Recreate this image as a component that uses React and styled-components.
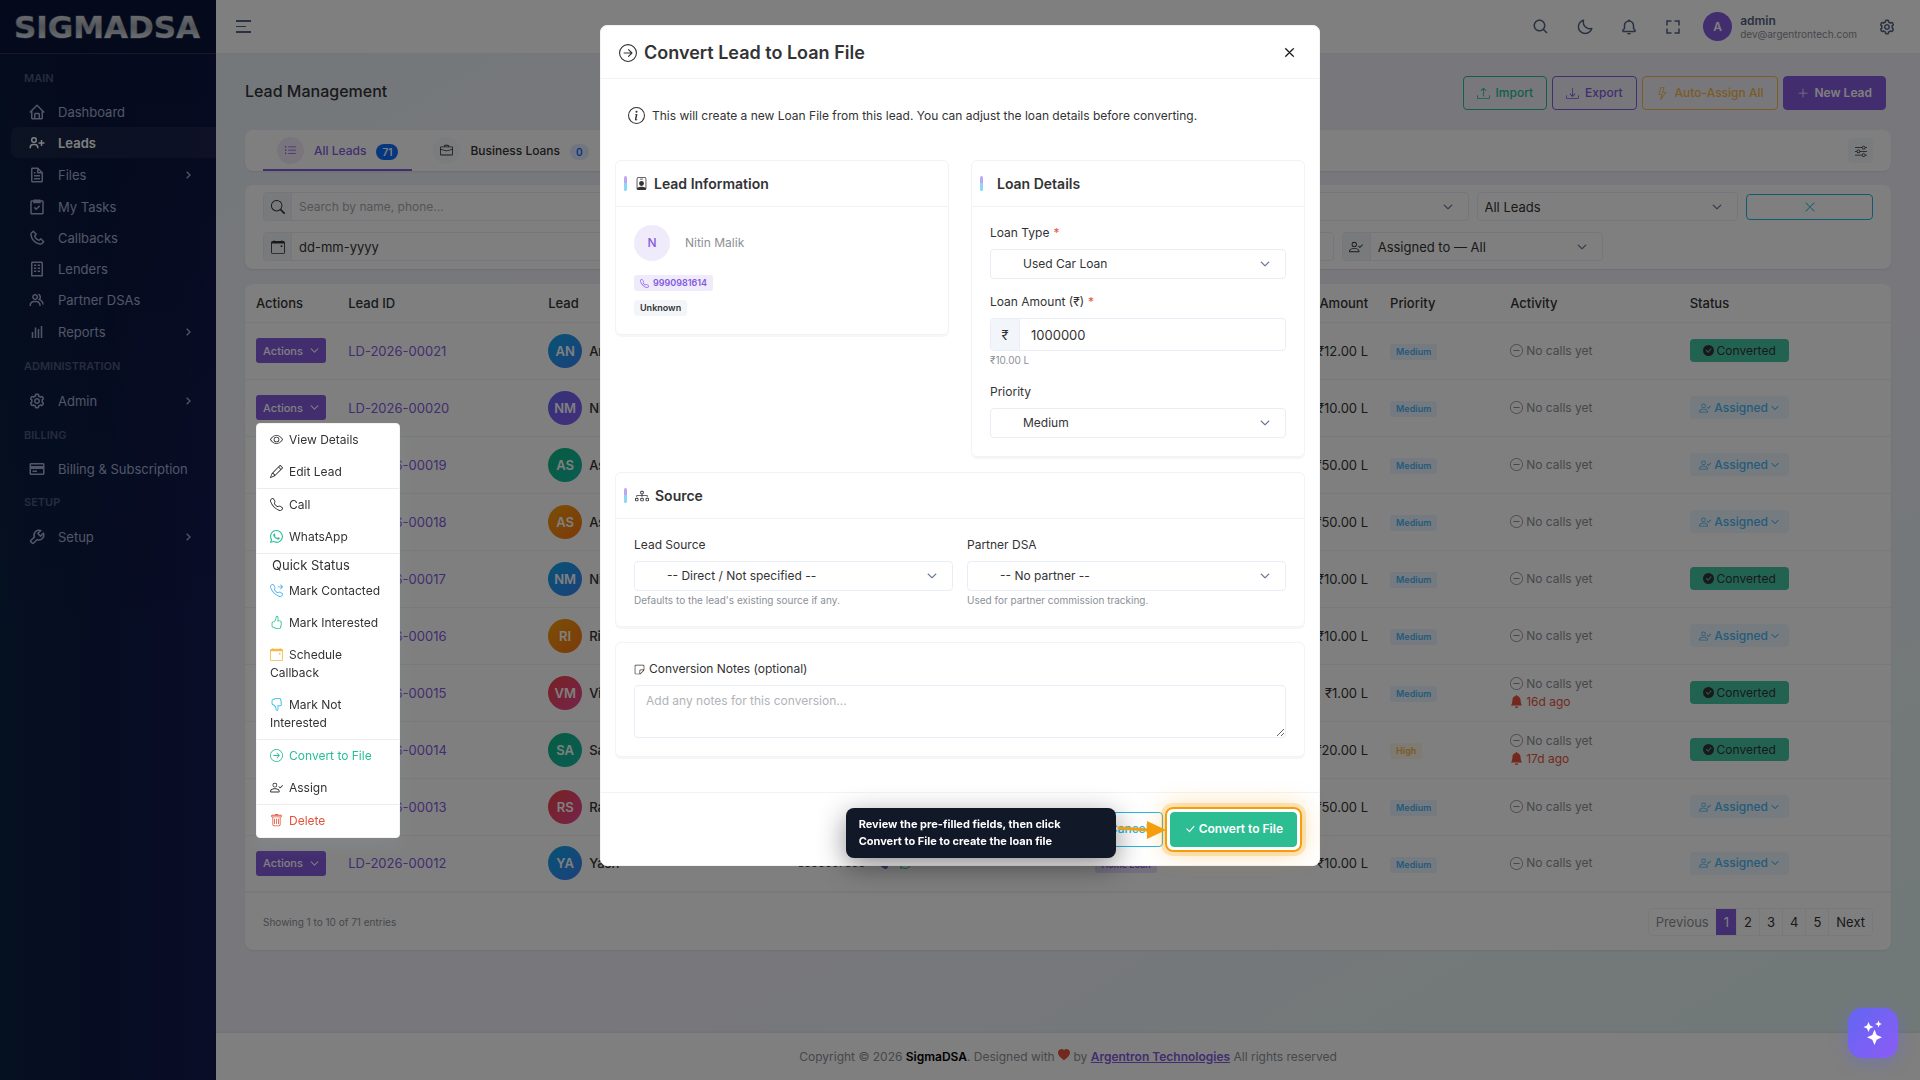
import { useState } from "react";
import styled, { createGlobalStyle, css } from "styled-components";
import {
  BiBarChart,
  BiBell,
  BiBuilding,
  BiChevronRight,
  BiCog,
  BiCreditCard,
  BiFile,
  BiFullscreen,
  BiGroup,
  BiHome,
  BiMoon,
  BiPhone,
  BiSearch,
  BiTask,
  BiUserPlus,
  BiWrench,
} from "react-icons/bi";
import {
  BsArrowRightCircle,
  BsBellFill,
  BsBriefcase,
  BsCalendarEvent,
  BsCheckCircleFill,
  BsCheckLg,
  BsChevronDown,
  BsDashCircle,
  BsDiagram3,
  BsDownload,
  BsEye,
  BsHandThumbsDown,
  BsHandThumbsUp,
  BsHeartFill,
  BsInfoCircle,
  BsLightning,
  BsListUl,
  BsPencil,
  BsPersonBadge,
  BsPlusLg,
  BsSearch,
  BsSliders,
  BsSticky,
  BsTelephone,
  BsTelephoneFill,
  BsTelephoneForward,
  BsTrash,
  BsUpload,
  BsWhatsapp,
  BsXLg,
} from "react-icons/bs";

const GlobalStyle = createGlobalStyle`
  :root {
    --primary: #845adf;
    --info: #49b6f5;
    --cyan: #23b7e5;
    --success: #26bf94;
    --warning: #f5b849;
    --danger: #e6533c;
    --text: #333335;
    --muted: #8c9097;
    --border: #f3f3f3;
    --input-border: #e9edf6;
  }
  * {
    box-sizing: border-box;
  }
  body {
    margin: 0;
    color: var(--text);
    font-family: Inter, "Liberation Sans", sans-serif;
    font-size: 13px;
    line-height: 18px;
  }
  button, input, select, textarea {
    font: inherit;
    color: inherit;
    margin: 0;
  }
  button {
    cursor: pointer;
    padding: 0;
    border: 0;
    background: none;
  }
  h1, h2, h3, p, ul {
    margin: 0;
    padding: 0;
  }
  svg {
    flex-shrink: 0;
  }
`;

/* ---------- shell ---------- */

const Page = styled.div`
  display: flex;
  min-height: 100vh;
  background: linear-gradient(150deg, #e6f1f6 0%, #f1eff9 34%, #f1eff9 62%, #e3f3f0 92%);
`;

const Sidebar = styled.aside`
  width: 216px;
  flex-shrink: 0;
  background:
    linear-gradient(180deg, rgba(6, 14, 44, 0.45), rgba(6, 14, 44, 0) 60%),
    linear-gradient(90deg, #0b2143 0%, #0d1a45 50%, #131a50 100%);
`;

const Brand = styled.div`
  height: 54px;
  display: flex;
  align-items: center;
  justify-content: center;
  background: #0b1338;
  border-bottom: 1px solid #2a3358;
`;

const Menu = styled.nav`
  padding: 6px 0 0 11px;
`;

const Category = styled.div`
  height: 36px;
  padding: 0 13px;
  display: flex;
  align-items: center;
  font-size: 11px;
  font-weight: 600;
  color: #4c5a7c;
`;

const NavItem = styled.a`
  height: ${(props) => (props.$tall ? "33px" : "31px")};
  padding: 0 20px 0 17px;
  display: flex;
  align-items: center;
  gap: 12px;
  border-radius: 7px 0 0 7px;
  font-size: 13px;
  font-weight: ${(props) => (props.$active ? 600 : 400)};
  color: ${(props) => (props.$active ? "#fff" : "#a3aed1")};
  background: ${(props) =>
    props.$active ? "rgba(255, 255, 255, 0.06)" : "none"};
  text-decoration: none;
  white-space: nowrap;
  span {
    flex: 1;
  }
`;

const Main = styled.div`
  flex: 1;
  min-width: 0;
  display: flex;
  flex-direction: column;
`;

const Header = styled.header`
  height: 54px;
  padding: 0 24px 0 20px;
  display: flex;
  align-items: center;
  justify-content: space-between;
  background: #fff;
  border-bottom: 1px solid #e9edf2;
  color: #536485;
`;

const HeaderRight = styled.div`
  display: flex;
  align-items: center;
  gap: 26px;
  font-size: 18px;
`;

const IconButton = styled.button`
  display: flex;
`;

const Profile = styled.div`
  display: flex;
  align-items: center;
  gap: 8px;
  margin: 0 -5px 0 -5px;
`;

const ProfileAvatar = styled.div`
  width: 29px;
  height: 29px;
  border-radius: 50%;
  display: grid;
  place-items: center;
  background: var(--primary);
  color: #fff;
  font-size: 12px;
  font-weight: 600;
`;

const ProfileName = styled.div`
  font-size: 12px;
  line-height: 15px;
  font-weight: 600;
`;

const ProfileMail = styled.div`
  font-size: 10px;
  line-height: 13px;
  color: var(--muted);
`;

const Content = styled.main`
  flex: 1;
  padding: 22px 29px 0;
`;

const PageHead = styled.div`
  display: flex;
  align-items: center;
  justify-content: space-between;
  padding-right: 5px;
  margin-bottom: 20px;
`;

const PageTitle = styled.h1`
  padding-bottom: 4px;
  font-size: 16px;
  line-height: 24px;
  font-weight: 500;
`;

const ButtonRow = styled.div`
  display: flex;
  gap: 5px;
`;

const Button = styled.button`
  height: 34px;
  padding: 0 13px;
  display: flex;
  align-items: center;
  gap: 6px;
  border: 1px solid ${(props) => props.$color};
  border-radius: 4px;
  font-size: 12px;
  font-weight: ${(props) => (props.$solid ? 600 : 500)};
  color: ${(props) => (props.$solid ? "#fff" : props.$color)};
  background: ${(props) => (props.$solid ? props.$color : "transparent")};
`;

const Card = styled.section`
  background: #fff;
  border-radius: 8px;
  box-shadow: 0 1px 2px rgba(0, 0, 0, 0.08);
`;

const Tabs = styled(Card)`
  height: 41px;
  padding: 0 18px;
  margin-bottom: 14px;
  display: flex;
  align-items: center;
  gap: 7px;
`;

const Tab = styled.button`
  height: 41px;
  padding: 2px 14px 0;
  display: flex;
  align-items: center;
  gap: 10px;
  border-bottom: 2px solid
    ${(props) => (props.$active ? "var(--primary)" : "transparent")};
  color: ${(props) => (props.$active ? "var(--primary)" : "var(--text)")};
  font-size: 12px;
  font-weight: 500;
`;

const TabIcon = styled.span`
  width: 27px;
  height: 27px;
  border-radius: 50%;
  display: grid;
  place-items: center;
  background: ${(props) => (props.$active ? "#f0ebfb" : "#f7f8fa")};
`;

const TabCount = styled.span`
  margin-top: 2px;
  padding: 0 6px;
  border-radius: 8px;
  font-size: 10px;
  line-height: 16px;
  font-weight: 600;
  color: ${(props) => (props.$active ? "#fff" : "#0d6efd")};
  background: ${(props) => (props.$active ? "#0d6efd" : "#e0ebfe")};
`;

const TabSettings = styled.button`
  width: 25px;
  height: 25px;
  margin-left: auto;
  display: grid;
  place-items: center;
  border-radius: 4px;
  background: #f5f6f9;
`;

const Filters = styled(Card)`
  padding: 7px 18px 8px;
  margin-bottom: 15px;
  display: grid;
  grid-template-columns: repeat(12, 1fr);
  gap: 11px 8px;
  align-items: center;
`;

const Group = styled.div`
  grid-column: span ${(props) => props.$span};
  min-width: 0;
  height: 29px;
  display: flex;
  border: 1px solid var(--input-border);
  border-radius: 4px;
  overflow: hidden;
`;

const Addon = styled.label`
  width: ${(props) => props.$width || "28px"};
  flex-shrink: 0;
  display: grid;
  place-items: center;
  background: #f2f5f9;
  border-right: 1px solid var(--input-border);
`;

const TextInput = styled.input`
  flex: 1;
  min-width: 0;
  padding: 0 ${(props) => props.$pad || "7px"};
  border: 0;
  outline: 0;
  background: none;
  font-size: ${(props) => (props.$small ? "12px" : "13px")};
  &::placeholder {
    color: ${(props) => (props.$dark ? "var(--text)" : "#a9abb0")};
    opacity: 1;
  }
`;

const SelectShell = styled.div`
  flex: 1;
  min-width: 0;
  display: grid;
  align-items: center;
  select,
  svg {
    grid-area: 1 / 1;
  }
  svg {
    justify-self: end;
    margin-right: 15px;
    pointer-events: none;
    color: #536485;
    stroke-width: 1;
  }
`;

const SelectInput = styled.select`
  width: 100%;
  height: 100%;
  padding: 0 36px 0 ${(props) => props.$pad || "7px"};
  appearance: none;
  border: 0;
  outline: 0;
  background: none;
  font-size: ${(props) => (props.$pad ? "12px" : "13px")};
`;

const ClearButton = styled.button`
  height: 26px;
  display: grid;
  place-items: center;
  border: 1px solid var(--cyan);
  border-radius: 4px;
  color: var(--cyan);
`;

/* ---------- table ---------- */

const Table = styled.table`
  width: 100%;
  table-layout: fixed;
  border-collapse: collapse;
  th,
  td {
    padding: 0 11px;
    text-align: left;
    border-bottom: 1px solid var(--border);
    white-space: nowrap;
  }
  th {
    height: 38px;
    font-weight: 500;
  }
  td {
    height: 57px;
  }
  tbody tr:last-child td {
    border-bottom-width: 2px;
  }
`;

const Col = styled.col`
  width: ${(props) => props.$w}%;
`;

const AmountHead = styled.th`
  && {
    text-align: right;
  }
`;

const AmountCell = styled.td`
  && {
    text-align: right;
  }
`;

const ActionsCell = styled.div`
  position: relative;
  width: 70px;
`;

const ActionsButton = styled.button`
  width: 70px;
  height: 25px;
  display: flex;
  align-items: center;
  justify-content: center;
  gap: 7px;
  border-radius: 3px;
  background: var(--primary);
  color: #fff;
  font-size: 11px;
  font-weight: 500;
  svg {
    stroke-width: 1;
  }
`;

const LeadLink = styled.a`
  color: var(--primary);
  text-decoration: none;
`;

const LeadCell = styled.div`
  display: flex;
  align-items: center;
  gap: 7px;
  font-weight: 500;
`;

const Avatar = styled.div`
  width: 34px;
  height: 34px;
  border-radius: 50%;
  display: grid;
  place-items: center;
  color: #fff;
  font-weight: 600;
  background: ${(props) => props.$bg};
`;

const PhoneCell = styled.div`
  display: flex;
  align-items: center;
  gap: 12px;
  font-size: 11px;
`;

const Badge = styled.span`
  display: inline-flex;
  align-items: center;
  gap: 4px;
  padding: 0 6px;
  border-radius: 3px;
  font-size: 9px;
  line-height: 16px;
  font-weight: 600;
  color: ${(props) => props.$color};
  background: ${(props) => props.$bg};
`;

const Activity = styled.div`
  display: flex;
  align-items: center;
  gap: 3px;
  font-size: 12px;
  color: ${(props) => (props.$late ? "var(--danger)" : "var(--muted)")};
`;

const Status = styled.button`
  width: 99px;
  height: 23px;
  display: flex;
  align-items: center;
  justify-content: center;
  gap: 3px;
  border-radius: 4px;
  font-size: 12px;
  font-weight: ${(props) => (props.$converted ? 400 : 500)};
  color: ${(props) => (props.$converted ? "var(--text)" : "var(--info)")};
  background: ${(props) => (props.$converted ? "#45c5a1" : "#eaf6fe")};
`;

const TableFoot = styled.div`
  height: 57px;
  padding: 0 18px;
  display: flex;
  align-items: center;
  justify-content: space-between;
  font-size: 10px;
  color: var(--muted);
`;

const Pagination = styled.nav`
  display: flex;
  border: 1px solid var(--border);
  border-radius: 4px;
`;

const PageButton = styled.button`
  height: 26px;
  padding: 0 7px;
  font-size: 13px;
  border-left: 1px solid var(--border);
  color: ${(props) => (props.$muted ? "var(--muted)" : "var(--text)")};
  &:first-child {
    border-left: 0;
  }
  ${(props) =>
    props.$active &&
    css`
      background: var(--primary);
      border-color: var(--primary);
      color: #fff;
    `}
`;

const Footer = styled.footer`
  height: 47px;
  display: flex;
  align-items: center;
  justify-content: center;
  background: #fff;
  box-shadow: 0 -1px 3px rgba(0, 0, 0, 0.06);
  font-size: 12px;
  color: var(--muted);
  b {
    font-weight: 600;
    color: #000;
  }
  a {
    font-weight: 600;
    color: var(--primary);
  }
`;

/* ---------- dropdown ---------- */

const Dropdown = styled.div`
  position: absolute;
  top: calc(100% + 3px);
  left: 0;
  z-index: 20;
  width: 144px;
  border: 1px solid var(--border);
  border-radius: 4px;
  background: #fff;
  box-shadow: 0 8px 16px rgba(149, 158, 180, 0.2);
  overflow: hidden;
`;

const DropItem = styled.button`
  display: block;
  width: 100%;
  padding: 7px 13px;
  text-align: left;
  white-space: normal;
  font-size: 12px;
  color: ${(props) => props.$color || "var(--text)"};
  svg {
    width: 13px;
    height: 13px;
    margin-right: 6px;
    vertical-align: -2px;
    color: ${(props) => props.$iconColor || "inherit"};
  }
`;

const DropHeader = styled.div`
  height: 21px;
  padding: 0 15px;
  display: flex;
  align-items: center;
`;

const DropLine = styled.div`
  height: 1px;
  background: #ececee;
`;

/* ---------- modal ---------- */

const Backdrop = styled.div`
  position: fixed;
  inset: 0;
  z-index: 10;
  background: rgba(0, 0, 0, 0.5);
`;

const ModalLayer = styled.div`
  position: fixed;
  inset: 0;
  z-index: 30;
  display: flex;
  align-items: flex-start;
  justify-content: center;
  padding-top: 25px;
  pointer-events: none;
`;

const Modal = styled.div`
  width: 720px;
  border: 1px solid var(--border);
  border-radius: 7px;
  background: #fff;
  pointer-events: auto;
`;

const ModalHead = styled.div`
  height: 53px;
  padding: 1px 24px 0 18px;
  display: flex;
  align-items: center;
  justify-content: space-between;
  border-bottom: 1px solid var(--border);
`;

const ModalTitle = styled.h2`
  display: flex;
  align-items: center;
  gap: 7px;
  font-size: 18px;
  line-height: 24px;
  font-weight: 600;
`;

const CloseButton = styled(IconButton)`
  color: #000;
  svg {
    stroke-width: 1;
  }
`;

const ModalBody = styled.form`
  padding: 17px 14px 35px;
  display: flex;
  flex-direction: column;
  gap: 15px;
`;

const Notice = styled.p`
  height: 49px;
  padding: 11px 13px 0;
  display: flex;
  align-items: flex-start;
  gap: 7px;
  font-size: 12px;
`;

const Columns = styled.div`
  display: grid;
  grid-template-columns: 1fr 1fr;
  gap: ${(props) => props.$gap};
  align-items: start;
`;

const Panel = styled.section`
  border: 1px solid var(--border);
  border-radius: 6px;
  box-shadow: 0 2px 0 #f6f6f8;
`;

const PanelTitle = styled.h3`
  height: 46px;
  padding: 0 8px;
  display: flex;
  align-items: center;
  border-bottom: 1px solid var(--border);
  font-size: 14px;
  font-weight: 600;
  &::before {
    content: "";
    width: 3px;
    height: 15px;
    margin-right: ${(props) => (props.$plain ? "14px" : "8px")};
    border-radius: 2px;
    background: linear-gradient(#bfa6f0 50%, #8bd8f2 50%);
  }
  svg {
    margin-right: 6px;
  }
`;

const PanelBody = styled.div`
  padding: 17px 18px 18px;
`;

const LeadIdentity = styled.div`
  display: flex;
  align-items: center;
  gap: 15px;
  margin: 1px 0 14px;
  color: var(--muted);
  font-size: 12px;
`;

const LeadInitial = styled.div`
  width: 36px;
  height: 36px;
  border-radius: 50%;
  display: grid;
  place-items: center;
  background: #f0ebfb;
  color: var(--primary);
  font-weight: 500;
`;

const BadgeStack = styled.div`
  display: flex;
  flex-direction: column;
  align-items: flex-start;
  gap: 9px;
`;

const Field = styled.div`
  display: flex;
  flex-direction: column;
  margin-top: ${(props) => props.$mt || "0"};
`;

const Label = styled.label`
  display: flex;
  align-items: center;
  gap: 4px;
  margin-bottom: 7px;
  font-size: 12px;
  span {
    color: var(--danger);
  }
`;

const FieldBox = styled.div`
  height: ${(props) => props.$height || "30px"};
  display: flex;
  border: 1px solid var(--input-border);
  border-radius: 4px;
  overflow: hidden;
`;

const Hint = styled.small`
  margin-top: 1px;
  font-size: 10px;
  line-height: 16px;
  color: var(--muted);
`;

const Notes = styled.textarea`
  display: block;
  width: 100%;
  height: 53px;
  padding: 6px 11px;
  border: 1px solid var(--input-border);
  border-radius: 4px;
  outline: 0;
  resize: vertical;
  font-size: 12px;
  &::placeholder {
    color: #b1b3b8;
  }
`;

const ModalFoot = styled.div`
  height: 73px;
  padding: 0 22px;
  display: flex;
  align-items: center;
  justify-content: flex-end;
  gap: 7px;
  border-top: 1px solid var(--border);
`;

const FootButton = styled(Button)`
  height: 35px;
  gap: 3px;
`;

const Spotlight = styled.div`
  position: relative;
  &::after {
    content: "";
    position: absolute;
    inset: -5px;
    border: 2px solid #f59e0b;
    border-radius: 8px;
    box-shadow:
      0 0 0 4px rgba(245, 158, 11, 0.22),
      0 0 24px rgba(245, 158, 11, 0.4);
    pointer-events: none;
  }
`;

const Tip = styled.div`
  position: absolute;
  top: -4px;
  right: calc(100% + 54px);
  width: 270px;
  padding: 8px 13px;
  border-radius: 8px;
  background: #111827;
  box-shadow: 0 8px 28px rgba(0, 0, 0, 0.45);
  color: #fff;
  font-size: 11px;
  line-height: 17px;
  font-weight: 700;
`;

const TipArrow = styled.svg`
  position: absolute;
  top: 7px;
  right: calc(100% + 3px);
`;

const AssistButton = styled.button`
  position: fixed;
  right: 22px;
  bottom: 22px;
  z-index: 40;
  width: 50px;
  height: 50px;
  display: grid;
  place-items: center;
  border-radius: 14px;
  background: linear-gradient(135deg, #6366f1, #8b5cf6);
  box-shadow: 0 4px 16px rgba(99, 102, 241, 0.4);
`;

const blue = "linear-gradient(135deg, #0ea5e9, #3b82f6)";
const purple = "linear-gradient(135deg, #6366f1, #8b5cf6)";
const green = "linear-gradient(135deg, #10b981, #14b8a6)";
const orange = "linear-gradient(135deg, #f59e0b, #f97316)";
const red = "linear-gradient(135deg, #ef4444, #ec4899)";

const leads = [
  { id: "LD-2026-00021", initials: "AN", name: "Ankit", bg: blue, amount: "₹12.00 L", priority: "Medium", converted: true },
  { id: "LD-2026-00020", initials: "NM", name: "Nitin Malik", bg: purple, amount: "₹10.00 L", priority: "Medium", menu: true },
  { id: "LD-2026-00019", initials: "AS", name: "Asha", bg: green, amount: "₹50.00 L", priority: "Medium" },
  { id: "LD-2026-00018", initials: "AS", name: "Asha", bg: orange, amount: "₹50.00 L", priority: "Medium" },
  { id: "LD-2026-00017", initials: "NM", name: "Nitin Malik", bg: blue, amount: "₹10.00 L", priority: "Medium", converted: true },
  { id: "LD-2026-00016", initials: "RI", name: "Riya", bg: orange, amount: "₹10.00 L", priority: "Medium" },
  { id: "LD-2026-00015", initials: "VM", name: "Vivek", bg: red, amount: "₹1.00 L", priority: "Medium", late: "16d ago", converted: true },
  { id: "LD-2026-00014", initials: "SA", name: "Sahil", bg: green, amount: "₹20.00 L", priority: "High", late: "17d ago", converted: true },
  { id: "LD-2026-00013", initials: "RS", name: "Ravi", bg: red, amount: "₹50.00 L", priority: "Medium" },
  { id: "LD-2026-00012", initials: "YA", name: "Yash", bg: blue, phone: "8300037833", loan: "Home Loan", amount: "₹10.00 L", priority: "Medium" },
];

const columnWidths = [5.6, 12.15, 15.15, 18.1, 10, 7.9, 7.3, 10.9, 12.9];

const navGroups = [
  {
    title: "MAIN",
    items: [
      { label: "Dashboard", icon: BiHome },
      { label: "Leads", icon: BiUserPlus, active: true },
      { label: "Files", icon: BiFile, sub: true },
      { label: "My Tasks", icon: BiTask },
      { label: "Callbacks", icon: BiPhone },
      { label: "Lenders", icon: BiBuilding },
      { label: "Partner DSAs", icon: BiGroup },
      { label: "Reports", icon: BiBarChart, sub: true },
    ],
  },
  { title: "ADMINISTRATION", items: [{ label: "Admin", icon: BiCog, sub: true }] },
  { title: "BILLING", items: [{ label: "Billing & Subscription", icon: BiCreditCard }] },
  { title: "SETUP", items: [{ label: "Setup", icon: BiWrench, sub: true }] },
];

function Logo() {
  return (
    <svg width="200" height="40" viewBox="0 0 200 40" role="img" aria-label="SIGMADSA">
      <defs>
        <linearGradient id="metal" x1="0" y1="0" x2="0" y2="1">
          <stop offset="0.2" stopColor="#d2d4d8" />
          <stop offset="0.5" stopColor="#a3a8b0" />
          <stop offset="0.85" stopColor="#dfe3e8" />
        </linearGradient>
      </defs>
      <text
        x="99"
        y="31"
        textAnchor="middle"
        fontFamily="DejaVu Sans, sans-serif"
        fontWeight="700"
        fontSize="31"
        fill="url(#metal)"
        stroke="#3c5672"
        strokeWidth="1"
        paintOrder="stroke"
      >
        SIGMADSA
      </text>
    </svg>
  );
}

// eslint-disable-next-line react/prop-types
function PersonCheck({ size }) {
  return (
    <svg width={size} height={size} viewBox="0 0 16 16" fill="currentColor">
      <path d="M6 8a3 3 0 1 0 0-6 3 3 0 0 0 0 6zm2-3a2 2 0 1 1-4 0 2 2 0 0 1 4 0zm4 8c0 1-1 1-1 1H1s-1 0-1-1 1-4 6-4 6 3 6 4zm-1-.004c-.001-.246-.154-.986-.832-1.664C9.516 10.680 8.289 10 6 10c-2.290 0-3.516.680-4.168 1.332-.678.678-.830 1.418-.832 1.664h10z" />
      <path d="M15.854 5.146a.5.5 0 0 1 0 .708l-3 3a.5.5 0 0 1-.708 0l-1.500-1.500a.5.5 0 0 1 .708-.708L12.500 7.793l2.646-2.647a.5.5 0 0 1 .708 0z" />
    </svg>
  );
}

// eslint-disable-next-line react/prop-types
function Select({ id, label, options, pad }) {
  return (
    <SelectShell>
      <SelectInput id={id} aria-label={label} $pad={pad}>
        {options.map((o) => (
          <option key={o}>{o}</option>
        ))}
      </SelectInput>
      <BsChevronDown size={10} />
    </SelectShell>
  );
}

function ActionsDropdown() {
  return (
    <Dropdown>
      <DropItem><BsEye />View Details</DropItem>
      <DropItem><BsPencil />Edit Lead</DropItem>
      <DropLine />
      <DropItem><BsTelephone />Call</DropItem>
      <DropItem $iconColor="var(--success)"><BsWhatsapp />WhatsApp</DropItem>
      <DropLine />
      <DropHeader>Quick Status</DropHeader>
      <DropItem $iconColor="var(--info)"><BsTelephoneForward />Mark Contacted</DropItem>
      <DropItem $iconColor="var(--success)"><BsHandThumbsUp />Mark Interested</DropItem>
      <DropItem $iconColor="var(--warning)"><BsCalendarEvent />Schedule Callback</DropItem>
      <DropItem $iconColor="var(--cyan)"><BsHandThumbsDown />Mark Not Interested</DropItem>
      <DropLine />
      <DropItem $color="var(--success)"><BsArrowRightCircle />Convert to File</DropItem>
      <DropItem><PersonCheck size={13} />Assign</DropItem>
      <DropLine />
      <DropItem $color="var(--danger)"><BsTrash />Delete</DropItem>
    </Dropdown>
  );
}

// eslint-disable-next-line react/prop-types
function LeadRow({ lead }) {
  return (
    <tr>
      <td>
        <ActionsCell>
          <ActionsButton>
            Actions <BsChevronDown size={9} />
          </ActionsButton>
          {lead.menu && <ActionsDropdown />}
        </ActionsCell>
      </td>
      <td>
        <LeadLink href="#">{lead.id}</LeadLink>
      </td>
      <td>
        <LeadCell>
          <Avatar $bg={lead.bg}>{lead.initials}</Avatar>
          {lead.name}
        </LeadCell>
      </td>
      <td>
        {lead.phone && (
          <PhoneCell>
            {lead.phone}
            <BsTelephoneFill size={11} color="#845adf" />
            <BsWhatsapp size={11} color="#26bf94" />
          </PhoneCell>
        )}
      </td>
      <td>
        {lead.loan && (
          <Badge $color="var(--primary)" $bg="#e6defa">
            {lead.loan}
          </Badge>
        )}
      </td>
      <AmountCell>{lead.amount}</AmountCell>
      <td>
        <Badge
          $color={lead.priority === "High" ? "var(--warning)" : "var(--info)"}
          $bg={lead.priority === "High" ? "#fef5e4" : "#e9f5fe"}
        >
          {lead.priority}
        </Badge>
      </td>
      <td>
        <Activity>
          <BsDashCircle size={13} /> No calls yet
        </Activity>
        {lead.late && (
          <Activity $late>
            <BsBellFill size={13} /> {lead.late}
          </Activity>
        )}
      </td>
      <td>
        {lead.converted ? (
          <Status $converted>
            <BsCheckCircleFill size={11} /> Converted
          </Status>
        ) : (
          <Status>
            <PersonCheck size={12} /> Assigned <BsChevronDown size={8} strokeWidth={1} />
          </Status>
        )}
      </td>
    </tr>
  );
}

function ConvertModal() {
  const [amount, setAmount] = useState("1000000");
  return (
    <ModalLayer>
      <Modal role="dialog" aria-labelledby="convert-title">
        <ModalHead>
          <ModalTitle id="convert-title">
            <BsArrowRightCircle size={18} /> Convert Lead to Loan File
          </ModalTitle>
          <CloseButton aria-label="Close">
            <BsXLg size={11} />
          </CloseButton>
        </ModalHead>
        <ModalBody id="convert-form" onSubmit={(e) => e.preventDefault()}>
          <Notice>
            <BsInfoCircle size={17} />
            This will create a new Loan File from this lead. You can adjust the
            loan details before converting.
          </Notice>
          <Columns $gap="22px">
            <Panel>
              <PanelTitle>
                <BsPersonBadge size={13} /> Lead Information
              </PanelTitle>
              <PanelBody>
                <LeadIdentity>
                  <LeadInitial>N</LeadInitial>
                  Nitin Malik
                </LeadIdentity>
                <BadgeStack>
                  <Badge $color="var(--primary)" $bg="#f0ebfb">
                    <BsTelephone size={9} /> 9990981614
                  </Badge>
                  <Badge $color="var(--text)" $bg="#f3f6f8">
                    Unknown
                  </Badge>
                </BadgeStack>
              </PanelBody>
            </Panel>
            <Panel>
              <PanelTitle $plain>Loan Details</PanelTitle>
              <PanelBody>
                <Field>
                  <Label htmlFor="loan-type">
                    Loan Type <span>*</span>
                  </Label>
                  <FieldBox>
                    <Select id="loan-type" pad="32px" options={["Used Car Loan"]} />
                  </FieldBox>
                </Field>
                <Field $mt="14px">
                  <Label htmlFor="loan-amount">
                    Loan Amount (₹) <span>*</span>
                  </Label>
                  <FieldBox $height="33px">
                    <Addon as="span" $width="29px">₹</Addon>
                    <TextInput
                      id="loan-amount"
                      $pad="11px"
                      value={amount}
                      onChange={(e) => setAmount(e.target.value)}
                    />
                  </FieldBox>
                  <Hint>₹10.00 L</Hint>
                </Field>
                <Field $mt="15px">
                  <Label htmlFor="priority">Priority</Label>
                  <FieldBox>
                    <Select id="priority" pad="32px" options={["Medium"]} />
                  </FieldBox>
                </Field>
              </PanelBody>
            </Panel>
          </Columns>
          <Panel>
            <PanelTitle>
              <BsDiagram3 size={14} /> Source
            </PanelTitle>
            <PanelBody>
              <Columns $gap="14px">
                <Field>
                  <Label htmlFor="lead-source">Lead Source</Label>
                  <FieldBox>
                    <Select id="lead-source" pad="32px" options={["-- Direct / Not specified --"]} />
                  </FieldBox>
                  <Hint>Defaults to the lead&apos;s existing source if any.</Hint>
                </Field>
                <Field>
                  <Label htmlFor="partner">Partner DSA</Label>
                  <FieldBox>
                    <Select id="partner" pad="32px" options={["-- No partner --"]} />
                  </FieldBox>
                  <Hint>Used for partner commission tracking.</Hint>
                </Field>
              </Columns>
            </PanelBody>
          </Panel>
          <Panel>
            <PanelBody>
              <Label htmlFor="notes">
                <BsSticky size={11} /> Conversion Notes (optional)
              </Label>
              <Notes id="notes" placeholder="Add any notes for this conversion..." />
            </PanelBody>
          </Panel>
        </ModalBody>
        <ModalFoot>
          <FootButton $color="var(--cyan)">Cancel</FootButton>
          <Spotlight>
            <FootButton $solid $color="#2dbd93" form="convert-form">
              <BsCheckLg size={12} /> Convert to File
            </FootButton>
            <Tip role="tooltip">
              Review the pre-filled fields, then click
              <br />
              Convert to File to create the loan file
            </Tip>
            <TipArrow width="50" height="22" viewBox="0 0 50 22">
              <path d="M2 9L31 11" stroke="#f59e0b" strokeWidth="3" strokeLinecap="round" />
              <path d="M30 2L49 11L30 20Z" fill="#f59e0b" />
            </TipArrow>
          </Spotlight>
        </ModalFoot>
      </Modal>
    </ModalLayer>
  );
}

export default function App() {
  return (
    <>
      <GlobalStyle />
      <Page>
        <Sidebar>
          <Brand>
            <Logo />
          </Brand>
          <Menu>
            {navGroups.map((group) => (
              <div key={group.title}>
                <Category>{group.title}</Category>
                {group.items.map((item) => (
                  <NavItem key={item.label} href="#" $active={item.active} $tall={item.sub}>
                    <item.icon size={18} />
                    <span>{item.label}</span>
                    {item.sub && <BiChevronRight size={16} />}
                  </NavItem>
                ))}
              </div>
            ))}
          </Menu>
        </Sidebar>
        <Main>
          <Header>
            <IconButton aria-label="Toggle sidebar">
              <svg width="15" height="14" viewBox="0 0 15 14" fill="#536485">
                <rect width="15" height="2" />
                <rect y="6" width="10" height="1" />
                <rect y="11" width="15" height="2" />
              </svg>
            </IconButton>
            <HeaderRight>
              <IconButton aria-label="Search"><BiSearch /></IconButton>
              <IconButton aria-label="Theme"><BiMoon /></IconButton>
              <IconButton aria-label="Notifications"><BiBell /></IconButton>
              <IconButton aria-label="Fullscreen"><BiFullscreen /></IconButton>
              <Profile>
                <ProfileAvatar>A</ProfileAvatar>
                <div>
                  <ProfileName>admin</ProfileName>
                  <ProfileMail>dev@argentrontech.com</ProfileMail>
                </div>
              </Profile>
              <IconButton aria-label="Settings"><BiCog /></IconButton>
            </HeaderRight>
          </Header>
          <Content>
            <PageHead>
              <PageTitle>Lead Management</PageTitle>
              <ButtonRow>
                <Button $color="var(--success)"><BsUpload size={13} />Import</Button>
                <Button $color="var(--primary)"><BsDownload size={13} />Export</Button>
                <Button $color="var(--warning)"><BsLightning size={13} />Auto-Assign All</Button>
                <Button $solid $color="var(--primary)"><BsPlusLg size={12} />New Lead</Button>
              </ButtonRow>
            </PageHead>
            <Tabs>
              <Tab $active>
                <TabIcon $active><BsListUl size={13} /></TabIcon>
                All Leads
                <TabCount $active>71</TabCount>
              </Tab>
              <Tab>
                <TabIcon><BsBriefcase size={13} /></TabIcon>
                Business Loans
                <TabCount>0</TabCount>
              </Tab>
              <TabSettings aria-label="Columns"><BsSliders size={12} /></TabSettings>
            </Tabs>
            <Filters>
              <Group $span={3}>
                <Addon htmlFor="search"><BsSearch size={14} /></Addon>
                <TextInput id="search" $small placeholder="Search by name, phone..." />
              </Group>
              <Group $span={2}><Select label="Status" options={["All Status"]} /></Group>
              <Group $span={2}><Select label="Type" options={["All Types"]} /></Group>
              <Group $span={2}><Select label="Source" options={["All Sources"]} /></Group>
              <Group $span={2}><Select label="Leads" options={["All Leads"]} /></Group>
              <ClearButton aria-label="Clear filters"><BsXLg size={12} /></ClearButton>
              <Group $span={3}>
                <Addon htmlFor="from"><BsCalendarEvent size={14} /></Addon>
                <TextInput id="from" $dark placeholder="dd-mm-yyyy" />
              </Group>
              <Group $span={3}>
                <Addon htmlFor="to"><BsCalendarEvent size={14} /></Addon>
                <TextInput id="to" $dark placeholder="dd-mm-yyyy" />
              </Group>
              <Group $span={2}>
                <TextInput aria-label="City" />
              </Group>
              <Group $span={2}>
                <Addon htmlFor="assigned"><PersonCheck size={14} /></Addon>
                <Select id="assigned" options={["Assigned to — All"]} />
              </Group>
            </Filters>
            <Card>
              <Table>
                <colgroup>
                  {columnWidths.map((w, i) => (
                    <Col key={i} $w={w} />
                  ))}
                </colgroup>
                <thead>
                  <tr>
                    <th>Actions</th>
                    <th>Lead ID</th>
                    <th>Lead</th>
                    <th>Phone</th>
                    <th>Loan Type</th>
                    <AmountHead>Amount</AmountHead>
                    <th>Priority</th>
                    <th>Activity</th>
                    <th>Status</th>
                  </tr>
                </thead>
                <tbody>
                  {leads.map((lead) => (
                    <LeadRow key={lead.id} lead={lead} />
                  ))}
                </tbody>
              </Table>
              <TableFoot>
                Showing 1 to 10 of 71 entries
                <Pagination>
                  <PageButton $muted>Previous</PageButton>
                  <PageButton $active>1</PageButton>
                  <PageButton>2</PageButton>
                  <PageButton>3</PageButton>
                  <PageButton>4</PageButton>
                  <PageButton>5</PageButton>
                  <PageButton>Next</PageButton>
                </Pagination>
              </TableFoot>
            </Card>
          </Content>
          <Footer>
            <span>
              Copyright © 2026 <b>SigmaDSA</b>. Designed with{" "}
              <BsHeartFill size={12} color="#e6533c" /> by{" "}
              <a href="#">Argentron Technologies</a> All rights reserved
            </span>
          </Footer>
        </Main>
      </Page>
      <Backdrop />
      <ConvertModal />
      <AssistButton aria-label="Assistant">
        <svg width="22" height="26" viewBox="0 0 22 26" fill="#fff">
          <path d="M12.500 9.500l2.200 5.400 5.300 2.400-5.300 2.400-2.200 5.400-2.200-5.400-5.300-2.400 5.300-2.400z" />
          <path d="M6.500 2l1.500 3.500L11.500 7 8 8.500 6.500 12 5 8.500 1.500 7 5 5.500z" />
          <path d="M16.500 0.500l1 2.500 2.500 1-2.500 1-1 2.500-1-2.500-2.500-1 2.500-1z" />
        </svg>
      </AssistButton>
    </>
  );
}
